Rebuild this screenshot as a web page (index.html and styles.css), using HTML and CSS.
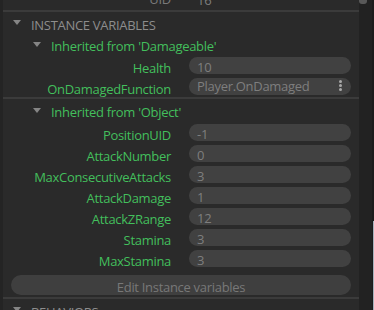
FILE: index.html
```html
<!DOCTYPE html>
<html>
	<head>
		<meta charset="utf-8">
		<title>Properties</title>
		<link rel="stylesheet" href="styles.css">
	</head>
	<body>
		<div class="window">
			<div class="edge"></div>
			<div class="panel">
				<div class="row uid"><span class="label">UID</span><span class="value plain">16</span></div>
				<div class="sep"></div>

				<div class="section"><span class="tri"></span>INSTANCE VARIABLES</div>

				<div class="group"><span class="tri"></span>Inherited from 'Damageable'</div>
				<div class="row"><span class="label">Health</span><span class="value">10</span></div>
				<div class="row"><span class="label">OnDamagedFunction</span><span class="value func">Player.OnDamaged<span class="kebab"><i></i><i></i><i></i></span></span></div>
				<div class="sep"></div>

				<div class="group obj"><span class="tri"></span>Inherited from 'Object'</div>
				<div class="row"><span class="label">PositionUID</span><span class="value">-1</span></div>
				<div class="row"><span class="label">AttackNumber</span><span class="value">0</span></div>
				<div class="row"><span class="label">MaxConsecutiveAttacks</span><span class="value">3</span></div>
				<div class="row"><span class="label">AttackDamage</span><span class="value">1</span></div>
				<div class="row"><span class="label">AttackZRange</span><span class="value">12</span></div>
				<div class="row"><span class="label">Stamina</span><span class="value">3</span></div>
				<div class="row"><span class="label">MaxStamina</span><span class="value">3</span></div>

				<div class="btn">Edit Instance variables</div>
				<div class="sep"></div>

				<div class="section"><span class="tri"></span>BEHAVIORS</div>
			</div>
			<div class="scrollbar"><div class="thumb"></div></div>
			<div class="strip"><div class="strip-light"></div></div>
		</div>
	</body>
</html>
```

FILE: styles.css
```css
html, body {margin: 0; padding: 0;}
body {background: #2a2a2a; font-family: "Open Sans", "Noto Sans", sans-serif; font-size: 13px; letter-spacing: -0.3px; overflow: hidden;}
.window {display: flex; height: 310px; overflow: hidden;}
.edge {width: 3px; background: #242424; flex: none;}
.panel {width: 356px; flex: none; margin-top: -11px;}

.sep {height: 2px; background: #3b3b3b;}

/* property rows */
.row {display: grid; grid-template-columns: 178px 1fr; height: 21px;}
.label {text-align: right; padding-right: 10px; color: #43bf5c; line-height: 21px; padding-top: 3px; white-space: nowrap;}
.value {margin: 2px 8px 2px 8px; height: 17px; line-height: 17px; padding: 4px 8px 0; box-sizing: border-box; background: #414141; border-radius: 9px; color: #7e7e7e; white-space: nowrap; display: flex; align-items: center;}
.value.plain {background: none; padding-top: 1px;}
.uid .label {color: #7a7a7a; padding-top: 0;}
.value.func {justify-content: space-between; padding-right: 9px; padding-top: 0;}
.value.func {line-height: 21px;}
.kebab {display: flex; flex-direction: column; gap: 1px; margin-top: -2px;}
.kebab i {display: block; width: 3px; height: 3px; border-radius: 50%; background: #a9a9a9;}

/* headers */
.section {height: 20px; padding-top: 2px; line-height: 22px; color: #8d8d8d; display: flex; align-items: flex-start; white-space: nowrap;}
.section .tri {margin: 6px 10px 0 10px;}
.group {height: 19px; padding: 2px 0 0 30px; line-height: 21px; color: #43bf5c; display: flex; align-items: flex-start; white-space: nowrap;}
.group.obj {height: 21px; line-height: 23px;}
.group .tri {margin: 6px 10px 0 0;}
.group.obj .tri {margin-top: 7px;}
.tri {display: inline-block; flex: none; width: 0; height: 0; border-left: 4.5px solid transparent; border-right: 4.5px solid transparent; border-top: 5px solid #858585;}

.btn {margin: 6px 8px 2px 8px; height: 20px; line-height: 24px; border-radius: 10px; background: #3f3f3f; color: #787878; text-align: center;}

/* right side */
.scrollbar {width: 13px; flex: none; background: #222;}
.thumb {width: 8px; height: 4px; background: #595959; border-radius: 0 0 3px 3px;}
.strip {width: 2px; flex: none; background: #1c1c1c; display: flex; flex-direction: column;}
.strip-light {margin-top: 221px; flex: 1; background: #1c1c1c; border-right: 1px solid #a7b3bd;}
```
